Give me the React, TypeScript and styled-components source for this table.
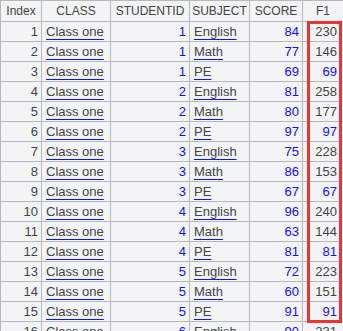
import React from 'react';
import styled, { createGlobalStyle } from 'styled-components';

interface Row {
  studentId: number;
  subject: string;
  score: number;
  f1: number;
}

const rows: Row[] = [
  { studentId: 1, subject: 'English', score: 84, f1: 230 },
  { studentId: 1, subject: 'Math', score: 77, f1: 146 },
  { studentId: 1, subject: 'PE', score: 69, f1: 69 },
  { studentId: 2, subject: 'English', score: 81, f1: 258 },
  { studentId: 2, subject: 'Math', score: 80, f1: 177 },
  { studentId: 2, subject: 'PE', score: 97, f1: 97 },
  { studentId: 3, subject: 'English', score: 75, f1: 228 },
  { studentId: 3, subject: 'Math', score: 86, f1: 153 },
  { studentId: 3, subject: 'PE', score: 67, f1: 67 },
  { studentId: 4, subject: 'English', score: 96, f1: 240 },
  { studentId: 4, subject: 'Math', score: 63, f1: 144 },
  { studentId: 4, subject: 'PE', score: 81, f1: 81 },
  { studentId: 5, subject: 'English', score: 72, f1: 223 },
  { studentId: 5, subject: 'Math', score: 60, f1: 151 },
  { studentId: 5, subject: 'PE', score: 91, f1: 91 },
  { studentId: 6, subject: 'English', score: 90, f1: 231 },
];

const App: React.FC = () => {
  return (
    <>
      <GlobalStyle />
      <Wrapper>
        <Table>
          <colgroup>
            <col style={{ width: 41 }} />
            <col style={{ width: 69 }} />
            <col style={{ width: 79 }} />
            <col style={{ width: 60 }} />
            <col style={{ width: 53 }} />
            <col style={{ width: 41 }} />
          </colgroup>
          <thead>
            <tr>
              <Th>Index</Th>
              <Th>CLASS</Th>
              <Th>STUDENTID</Th>
              <Th>SUBJECT</Th>
              <Th>SCORE</Th>
              <Th>F1</Th>
            </tr>
          </thead>
          <tbody>
            {rows.map((row, i) => (
              <tr key={i}>
                <Td $align='right'>{i + 1}</Td>
                <Td>
                  <Link>Class one</Link>
                </Td>
                <Td $align='right' $blue>
                  {row.studentId}
                </Td>
                <Td>
                  <Link>{row.subject}</Link>
                </Td>
                <Td $align='right' $blue>
                  {row.score}
                </Td>
                {/* single-subject sums stay plain values, so they show blue */}
                <Td $align='right' $blue={row.subject === 'PE'} $padRight={6}>
                  {row.f1}
                </Td>
              </tr>
            ))}
          </tbody>
        </Table>
        <Highlight />
      </Wrapper>
    </>
  );
};

export default App;

const GlobalStyle = createGlobalStyle`
  html, body {
    margin: 0;
    padding: 0;
    background: #ffffff;
  }
  body {
    width: 343px;
    height: 331px;
    overflow: hidden;
    font-family: 'Liberation Sans', Arial, sans-serif;
  }
`;

const Wrapper = styled.div`
  position: relative;
  width: 343px;
  height: 331px;
  overflow: hidden;
  background: #f3f4f5;
`;

const Table = styled.table`
  border-collapse: collapse;
  table-layout: fixed;
  width: 343px;
  font-size: 13px;
  color: #444444;
  background: #f3f4f5;
`;

const Th = styled.th`
  height: 20px;
  padding: 0 1px;
  border: 1px solid #b6babd;
  font-size: 12px;
  font-weight: normal;
  text-align: center;
  white-space: nowrap;
  overflow: hidden;
`;

const Td = styled.td<{ $align?: 'left' | 'right'; $blue?: boolean; $padRight?: number }>`
  height: 19px;
  padding: 0 ${(p) => p.$padRight ?? 3}px 0 4px;
  border: 1px solid #b6babd;
  text-align: ${(p) => p.$align || 'left'};
  color: ${(p) => (p.$blue ? '#0f0fff' : '#444444')};
  white-space: nowrap;
  overflow: hidden;
  line-height: 18px;
`;

const Link = styled.span`
  text-decoration: underline;
  text-decoration-color: #0f0fff;
  text-underline-offset: 3px;
`;

const Highlight = styled.div`
  position: absolute;
  left: 307px;
  top: 21px;
  width: 29px;
  height: 296px;
  border: 3px solid #ee3333;
  pointer-events: none;
`;
